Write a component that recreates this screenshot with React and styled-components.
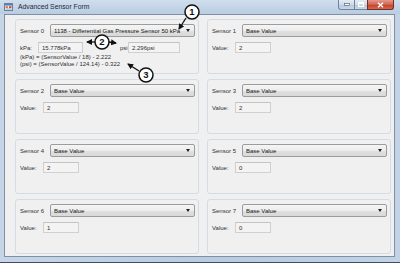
import React from 'react'
import styled, { createGlobalStyle } from 'styled-components'

// global
const GlobalStyle = createGlobalStyle`
  html, body {
    margin: 0;
    padding: 0;
    background: #ffffff;
  }
  body {
    font-family: "Liberation Sans", Arial, sans-serif;
  }
`

// window chrome
const Window = styled.div`
  position: relative;
  width: 400px;
  height: 263px;
  box-sizing: border-box;
  display: flex;
  flex-direction: column;
  background: linear-gradient(to right, #c6d6e8, #b8cbe0 55%, #c2d3e6);
  border-bottom: 1px solid #3f4e60;
  overflow: hidden;
`

const TitleBar = styled.div`
  height: 14px;
  display: flex;
  align-items: flex-start;
  background: linear-gradient(#d0deed, #b9cce1);
`

const AppIcon = styled.svg`
  margin: 3px 0 0 4px;
  flex: none;
`

const Title = styled.span`
  margin: 3px 0 0 5px;
  font-size: 6.8px;
  line-height: 8px;
  color: #1d2a3a;
`

const Caption = styled.div`
  margin-left: auto;
  margin-right: 6px;
  display: flex;
`

const CaptionButton = styled.div`
  width: ${p => p.w}px;
  height: 10px;
  box-sizing: border-box;
  display: flex;
  align-items: center;
  justify-content: center;
  border: 1px solid ${p => (p.close ? '#7a2b22' : '#71829a')};
  border-top: none;
  margin-left: -1px;
  border-radius: ${p => p.radius || '0'};
  background: ${p =>
    p.close
      ? 'linear-gradient(#e59a8c, #d2624f 50%, #c2412d 51%, #cf6a4c)'
      : 'linear-gradient(#e4ecf5, #cfdbe9 50%, #b7c8dc 51%, #c9d7e6)'};
`

const Client = styled.div`
  flex: 1;
  margin: 0 5px 5px 4px;
  border: 1px solid #7f90a5;
  background: #f0f0f0;
  padding: 4px 0 0 10px;
`

// form
const Grid = styled.div`
  display: grid;
  grid-template-columns: repeat(2, 184px);
  grid-auto-rows: 55px;
  gap: 5px 8px;
`

const Group = styled.div`
  box-sizing: border-box;
  border: 1px solid #d4dce3;
  border-radius: 3px;
  padding: 4px 3px 0 4px;
  font-size: 6px;
  color: #303030;
`

const Row = styled.div`
  display: flex;
  align-items: center;
  height: ${p => p.h || 13}px;
  margin-top: ${p => p.mt || 0}px;
`

const Label = styled.span`
  flex: none;
  width: ${p => p.w}px;
  margin-left: ${p => p.ml || 0}px;
  white-space: nowrap;
`

const Combo = styled.div`
  flex: 1;
  height: 13px;
  box-sizing: border-box;
  display: flex;
  align-items: center;
  padding: 0 4px 0 3px;
  border: 1px solid #9c9c9c;
  border-radius: 2px;
  background: linear-gradient(#f5f5f5, #ededed 50%, #e0e0e0 51%, #d9d9d9);
  color: #151515;
  white-space: nowrap;
  overflow: hidden;
`

const ComboArrow = styled.span`
  margin-left: auto;
  flex: none;
  width: 0;
  height: 0;
  border-left: 2.5px solid transparent;
  border-right: 2.5px solid transparent;
  border-top: 3px solid #202020;
`

const Field = styled.div`
  flex: none;
  width: ${p => p.w}px;
  height: 11px;
  box-sizing: border-box;
  display: flex;
  align-items: center;
  padding-left: 3px;
  border: 1px solid #d0d0d0;
  border-top-color: #c4c4c4;
  background: #f3f3f3;
  color: #303030;
  white-space: nowrap;
`

const Formula = styled.div`
  margin-top: 1px;
  line-height: 7px;
  white-space: nowrap;
`

// callouts drawn over the form
const Overlay = styled.svg`
  position: absolute;
  left: 0;
  top: 0;
  pointer-events: none;
`

const CalloutText = styled.text`
  font-family: "Liberation Sans", Arial, sans-serif;
  font-weight: bold;
  font-size: 9.5px;
`

const sensors = [
  { id: 1, value: '2' },
  { id: 2, value: '2' },
  { id: 3, value: '2' },
  { id: 4, value: '2' },
  { id: 5, value: '0' },
  { id: 6, value: '1' },
  { id: 7, value: '0' },
]

const callouts = [
  { n: 1, cx: 192, cy: 12 },
  { n: 2, cx: 102, cy: 42 },
  { n: 3, cx: 146, cy: 75 },
]

const arrows = [
  [186, 18, 179, 29],
  [95, 42, 87, 42],
  [109, 42, 116, 43],
  [139, 71, 128, 64],
]

const SensorGroup = ({ id, value }) => (
  <Group>
    <Row>
      <Label w={30}>Sensor {id}</Label>
      <Combo>
        Base Value
        <ComboArrow />
      </Combo>
    </Row>
    <Row h={11} mt={5}>
      <Label w={23}>Value:</Label>
      <Field w={36}>{value}</Field>
    </Row>
  </Group>
)

const Callouts = () => (
  <Overlay width="400" height="263" viewBox="0 0 400 263">
    <defs>
      <marker id="head" markerWidth="6" markerHeight="6" refX="5" refY="3" orient="auto" markerUnits="userSpaceOnUse">
        <path d="M0,0 L6,3 L0,6 Z" fill="#111" />
      </marker>
    </defs>
    {arrows.map(([x1, y1, x2, y2], i) => (
      <line key={i} x1={x1} y1={y1} x2={x2} y2={y2} stroke="#111" strokeWidth="1.3" markerEnd="url(#head)" />
    ))}
    {callouts.map(c => (
      <g key={c.n}>
        <circle cx={c.cx} cy={c.cy} r="7" fill="#ffffff" stroke="#111" strokeWidth="1.5" />
        <CalloutText x={c.cx} y={c.cy + 3.4} textAnchor="middle" fill="#111">
          {c.n}
        </CalloutText>
      </g>
    ))}
  </Overlay>
)

const App = () => (
  <>
    <GlobalStyle />
    <Window>
      <TitleBar>
        <AppIcon width="9" height="8" viewBox="0 0 9 8">
          <rect x="0.5" y="0.5" width="8" height="7" fill="#f4f6f9" stroke="#6a7f99" />
          <rect x="1" y="1" width="7" height="1.6" fill="#4f80bf" />
          <rect x="1.5" y="3.2" width="2.5" height="2" fill="#e07a35" />
          <rect x="5" y="3.2" width="2.5" height="2" fill="#d4453a" />
          <rect x="1.5" y="5.6" width="6" height="1" fill="#8fb0d8" />
        </AppIcon>
        <Title>Advanced Sensor Form</Title>
        <Caption>
          <CaptionButton w={17} radius="0 0 0 3px">
            <svg width="6" height="3" viewBox="0 0 6 3">
              <rect x="0.5" y="0.5" width="5" height="2" fill="#fff" stroke="#4a5668" strokeWidth="0.6" />
            </svg>
          </CaptionButton>
          <CaptionButton w={14}>
            <svg width="6" height="5" viewBox="0 0 6 5">
              <rect x="0.6" y="0.6" width="4.8" height="3.8" fill="none" stroke="#fff" strokeWidth="1.1" />
              <rect x="0.6" y="0.6" width="4.8" height="1.2" fill="#fff" />
            </svg>
          </CaptionButton>
          <CaptionButton w={27} close radius="0 0 3px 0">
            <svg width="7" height="6" viewBox="0 0 7 6">
              <path d="M1,0.8 L6,5.2 M6,0.8 L1,5.2" stroke="#fff" strokeWidth="1.5" />
            </svg>
          </CaptionButton>
        </Caption>
      </TitleBar>
      <Client>
        <Grid>
          <Group>
            <Row>
              <Label w={30}>Sensor 0</Label>
              <Combo>
                1138 - Differential Gas Pressure Sensor 50 kPa
                <ComboArrow />
              </Combo>
            </Row>
            <Row h={11} mt={5}>
              <Label w={18}>kPa:</Label>
              <Field w={45}>15.778kPa</Field>
              <Label w={8} ml={37}>psi:</Label>
              <Field w={52}>2.296psi</Field>
            </Row>
            <Formula>
              (kPa) = (SensorValue / 18) - 2.222
              <br />
              (psi) = (SensorValue / 124.14) - 0.322
            </Formula>
          </Group>
          {sensors.map(s => (
            <SensorGroup key={s.id} id={s.id} value={s.value} />
          ))}
        </Grid>
      </Client>
      <Callouts />
    </Window>
  </>
)

export default App
